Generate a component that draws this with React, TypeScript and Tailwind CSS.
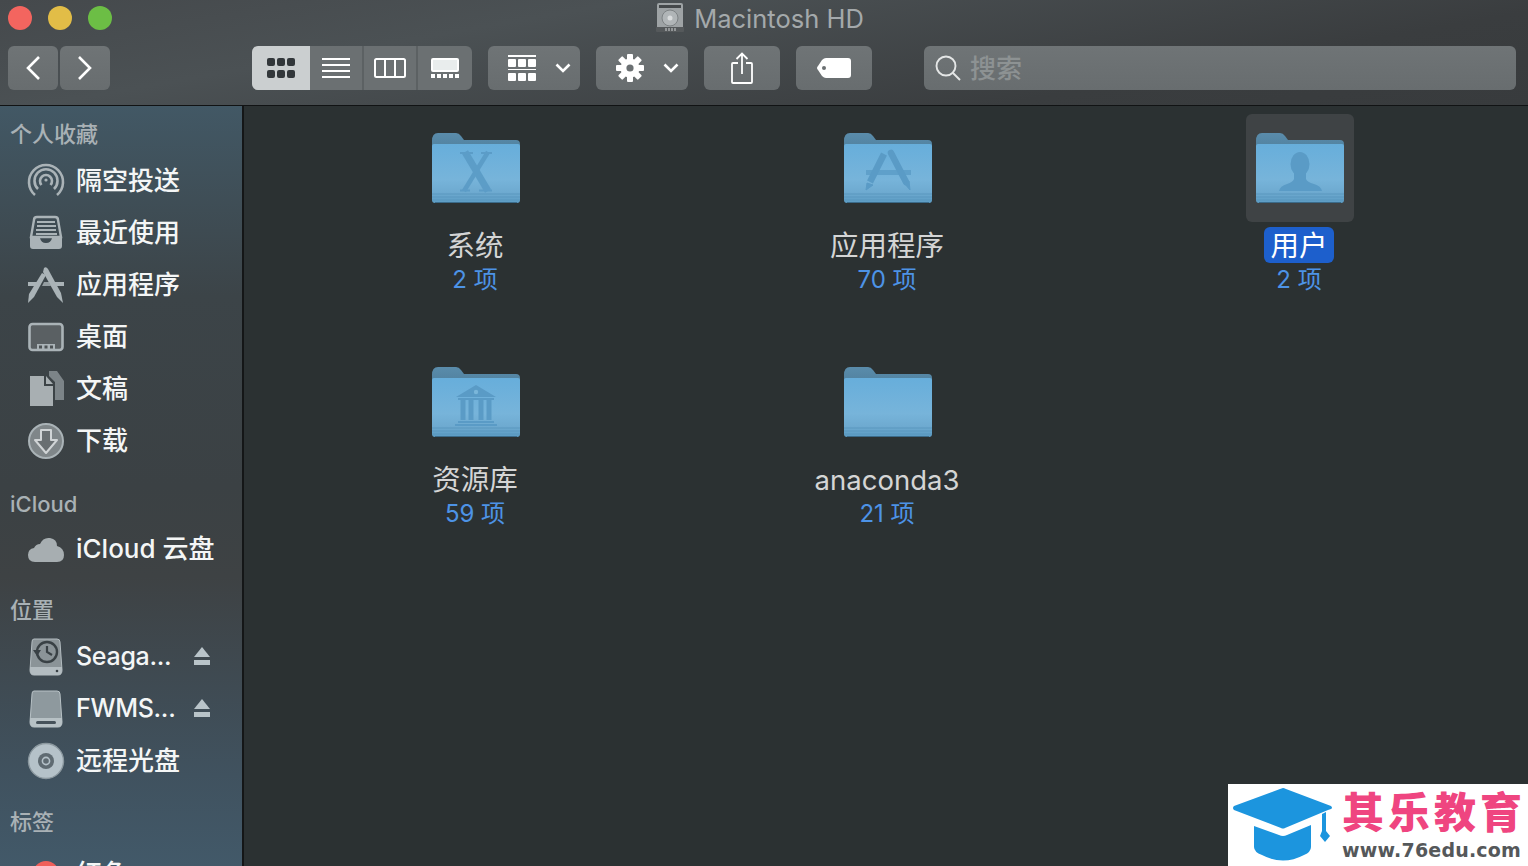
import React from "react";

const FONT = "font-['Inter','Noto_Sans_CJK_SC',sans-serif]";

function Defs() {
  return (
    <svg width="0" height="0" className="absolute">
      <defs>
        <linearGradient id="ff" x1="0" y1="0" x2="0" y2="1">
          <stop offset="0" stopColor="#67aedb" />
          <stop offset="0.6" stopColor="#77b4da" />
          <stop offset="0.82" stopColor="#6eaad0" />
          <stop offset="1" stopColor="#5c9cc4" />
        </linearGradient>
        <linearGradient id="fb" x1="0" y1="0" x2="0" y2="1">
          <stop offset="0" stopColor="#5a8cab" />
          <stop offset="1" stopColor="#4e7e9c" />
        </linearGradient>
      </defs>
    </svg>
  );
}

function Folder({ kind }: { kind?: "x" | "app" | "user" | "lib" }) {
  const c = "#5a9bc6";
  return (
    <svg width="88" height="70" viewBox="0 0 88 70">
      <path d="M0 8 Q0 0 6 0 H24 Q27 0 29 3 L32 7 H84 Q88 7 88 11 V20 H0 Z" fill="url(#fb)" />
      <path d="M2 11 H86 Q88 11 88 13 V67 Q88 70 85 70 H3 Q0 70 0 67 V13 Q0 11 2 11 Z" fill="url(#ff)" />
      <path d="M0 61 H88 M0 64 H88 M0 67 H88" stroke="#5895bc" strokeWidth="1" opacity="0.8" />
      <path d="M3 69.5 H85" stroke="#3b6b8a" strokeWidth="1" />
      {kind === "x" && (
        <g stroke={c} fill="none" opacity="0.9">
          <path d="M33 19 L56 58" strokeWidth="7" />
          <path d="M56 19 L32 58" strokeWidth="4.5" />
          <path d="M28 20 H41 M49 20 H60 M28 57.5 H38 M47 57.5 H60" strokeWidth="2" />
        </g>
      )}
      {kind === "app" && (
        <g fill="none" stroke={c}>
          <path d="M22 39.5 H67" strokeWidth="5" opacity="0.8" />
          <path d="M40 21 L26 49" strokeWidth="6.5" />
          <path d="M47 20 L62 49" strokeWidth="6.5" strokeLinecap="round" />
          <path d="M23 50 L22 57 L29 52 Z M60 50 L66 57 L65 48 Z" fill={c} strokeWidth="1" />
        </g>
      )}
      {kind === "user" && (
        <g fill={c}>
          <ellipse cx="44" cy="31" rx="9.5" ry="12" />
          <path d="M38 38 H50 V46 Q51 49 58 51 Q65 53 66 58 H23 Q24 53 31 51 Q37 49 38 46 Z" />
        </g>
      )}
      {kind === "lib" && (
        <g fill={c}>
          <path d="M44 18 L64 30 H24 Z" />
          <circle cx="44" cy="25" r="2.2" fill="#7ab6da" />
          <rect x="28.5" y="33" width="5" height="20" />
          <rect x="36.5" y="33" width="5" height="20" />
          <rect x="46.5" y="33" width="5" height="20" />
          <rect x="54.5" y="33" width="5" height="20" />
          <rect x="26" y="31" width="36" height="2" />
          <rect x="26" y="54" width="36" height="2" />
          <rect x="23" y="57" width="42" height="2" />
        </g>
      )}
    </svg>
  );
}

function Item({ name, sub, kind, selected, latin }: { name: string; sub: string; kind?: "x" | "app" | "user" | "lib"; selected?: boolean; latin?: boolean }) {
  return (
    <div className="flex flex-col items-center h-[234px]">
      <div className={`w-[108px] h-[108px] rounded-md flex items-center justify-center ${selected ? "bg-[#3f4345]" : ""}`}>
        <Folder kind={kind} />
      </div>
      <div className={`mt-[5px] h-[36px] leading-[38px] rounded-md -translate-x-[1px] ${latin ? "text-[27.5px]" : "text-[28.5px]"} ${selected ? "bg-[#1d5fcc] text-white px-[6px]" : "text-[#d4d5d5]"}`}>{name}</div>
      <div className="mt-[2px] h-[30px] leading-[30px] text-[24px] text-[#4d93e6] -translate-x-[1px]">{sub}</div>
    </div>
  );
}

const ic = "#aab3b7";

const Icons: Record<string, React.ReactNode> = {
  airdrop: (
    <svg width="38" height="38" viewBox="0 0 38 38" fill="none" stroke={ic}>
      <path d="M8 33 A17 17 0 1 1 30 33" strokeWidth="2.6" />
      <path d="M11 27 A11.5 11.5 0 1 1 27 27" strokeWidth="2.6" />
      <path d="M14.5 23 A6 6 0 1 1 23.5 23" strokeWidth="2.6" />
      <circle cx="19" cy="18" r="1.6" fill={ic} stroke="none" />
    </svg>
  ),
  recent: (
    <svg width="38" height="38" viewBox="0 0 38 38">
      <path d="M7 6 Q7 3 10 3 H28 Q31 3 31 6 L34 23 H4 Z" fill="none" stroke={ic} strokeWidth="2.4" />
      <path d="M3 24 H13 Q14 29 19 29 Q24 29 25 24 H35 V32 Q35 35 32 35 H6 Q3 35 3 32 Z" fill={ic} />
      <path d="M10 8 H28 M10 12 H29 M9 16 H29 M9 20 H30" stroke={ic} strokeWidth="2" />
    </svg>
  ),
  apps: (
    <svg width="38" height="38" viewBox="0 0 38 38" fill={ic}>
      <path d="M1 16 H13 L12 20 H1 Z M25 16 H37 V20 H27 Z" />
      <path d="M15 7 L19 9 L7 31 L1 37 L2 28 Z" />
      <path d="M17 2 Q19 0 21 3 L34 27 L36 37 L30 31 L16 6 Z" />
      <path d="M17 16 H22 L24 20 H15 Z" opacity="0.8" />
    </svg>
  ),
  desktop: (
    <svg width="38" height="38" viewBox="0 0 38 38">
      <rect x="2.5" y="6" width="33" height="26" rx="3" fill="#5a6063" stroke={ic} strokeWidth="2.6" />
      <rect x="10" y="26" width="18" height="6" fill={ic} />
      <path d="M12 27.5 h3 v3 h-3z M17.5 27.5 h3 v3 h-3z M23 27.5 h3 v3 h-3z" fill="#4c5255" />
    </svg>
  ),
  docs: (
    <svg width="38" height="38" viewBox="0 0 38 38">
      <path d="M22 1 H30 L37 11 V30 H28 V12 L22 6 Z" fill="#7c8488" />
      <path d="M3 6 H17 V16 H26 V36 H3 Z" fill="#a8afb2" />
      <path d="M19 6 L26 14 H19 Z" fill="#a8afb2" />
    </svg>
  ),
  down: (
    <svg width="38" height="38" viewBox="0 0 38 38">
      <circle cx="19" cy="19" r="17" fill="#7f8689" stroke={ic} strokeWidth="2" />
      <path d="M14 8 H24 V18 H30 L19 31 L8 18 H14 Z" fill="#696f72" stroke="#d0d4d6" strokeWidth="2" strokeLinejoin="round" />
    </svg>
  ),
  cloud: (
    <svg width="38" height="38" viewBox="0 0 38 38">
      <path d="M8 32 Q1 32 1 25 Q1 19 7 18 Q9 14 13 14 Q16 7 23 8 Q30 9 30 16 Q37 18 37 25 Q37 32 30 32 Z" fill="#a7aeb1" />
    </svg>
  ),
  tm: (
    <svg width="38" height="38" viewBox="0 0 38 38">
      <path d="M7 1 H30 Q33 1 33 4 L35 32 Q35 37 31 37 H7 Q3 37 3 32 L5 4 Q5 1 7 1 Z" fill="#8b9498" stroke="#b3bcc0" strokeWidth="1" />
      <path d="M3 29 H35 V32 Q35 37 31 37 H7 Q3 37 3 32 Z" fill="#b3bcc0" />
      <circle cx="30" cy="33" r="1.3" fill="#394145" />
      <circle cx="20" cy="14" r="10" fill="none" stroke="#394145" strokeWidth="2.4" />
      <path d="M20 8 V14 L25 17" fill="none" stroke="#394145" strokeWidth="2.2" />
      <path d="M6 12 H14 L10 18 Z" fill="#394145" />
    </svg>
  ),
  drive: (
    <svg width="38" height="38" viewBox="0 0 38 38">
      <path d="M7 1 H30 Q33 1 33 4 L35 32 Q35 37 31 37 H7 Q3 37 3 32 L5 4 Q5 1 7 1 Z" fill="#8e999e" stroke="#b7c1c5" strokeWidth="1" />
      <path d="M3 28 H35 V32 Q35 37 31 37 H7 Q3 37 3 32 Z" fill="#b7c1c5" />
      <rect x="9" y="31" width="20" height="3" rx="1.5" fill="#46525a" />
    </svg>
  ),
  disc: (
    <svg width="38" height="38" viewBox="0 0 38 38">
      <circle cx="19" cy="19" r="17.5" fill="#b5c2c9" stroke="#8b989f" strokeWidth="1.4" />
      <circle cx="19" cy="19" r="8" fill="#5f6b72" />
      <circle cx="19" cy="19" r="3.6" fill="none" stroke="#b5c2c9" strokeWidth="1.6" />
    </svg>
  ),
  red: (
    <svg width="38" height="38" viewBox="0 0 38 38">
      <circle cx="19" cy="19" r="13" fill="#f05f5a" />
    </svg>
  ),
};

function Eject() {
  return (
    <svg width="16" height="18" viewBox="0 0 16 18" className="mr-[32px] -translate-y-[1px]" fill="#b9c4c9">
      <path d="M8 0 L16 10 H0 Z" />
      <rect y="13" width="16" height="5" />
    </svg>
  );
}

function Row({ icon, label, eject, latin }: { icon: string; label: string; eject?: boolean; latin?: boolean }) {
  return (
    <div className="flex items-center h-[52px] pl-[27px]">
      <div className="w-[38px] h-[38px] mr-[11px] shrink-0">{Icons[icon]}</div>
      <span className={`flex-1 text-[#f4f6f6] font-medium whitespace-nowrap ${latin ? "text-[25px] tracking-[-0.3px]" : "pb-[2px] text-[26px]"}`}>{label}</span>
      {eject && <Eject />}
    </div>
  );
}

function Head({ children, className }: { children: React.ReactNode; className?: string }) {
  return <div className={`h-[38px] leading-[38px] pl-[10px] text-[22px] font-medium text-[#a9b1b5] ${className ?? ""}`}>{children}</div>;
}

const btn = "h-[44px] rounded-[6px] bg-[linear-gradient(#6f7476,#686d6f)] flex items-center justify-center";

function Chevron() {
  return (
    <svg width="16" height="10" viewBox="0 0 16 10" fill="none" stroke="#fff" strokeWidth="2.6">
      <path d="M1.5 1.5 L8 8 L14.5 1.5" />
    </svg>
  );
}

function Toolbar() {
  return (
    <div className="h-[105px] bg-[linear-gradient(170deg,#45494c_0%,#4b5154_30%,#3a3d3f_75%,#383b3d_100%)]">
      <div className="relative h-[46px] pt-[6px] pl-[8px] flex gap-[16px]">
        <div className="w-[24px] h-[24px] rounded-full bg-[#f3655f]" />
        <div className="w-[24px] h-[24px] rounded-full bg-[#e2bd47]" />
        <div className="w-[24px] h-[24px] rounded-full bg-[#6cbe45]" />
        <div className="flex-1 flex items-start justify-center pr-[136px] -mt-[5px] gap-[10px]">
          <svg width="28" height="30" viewBox="0 0 28 30" className="mt-[2px]">
            <rect x="1" y="0" width="26" height="28" rx="2" fill="#9ea3a5" />
            <rect x="3" y="2" width="22" height="3" fill="#44484a" />
            <circle cx="14" cy="15" r="8" fill="#b0b5b7" stroke="#7d8284" />
            <circle cx="14" cy="15" r="2.5" fill="#d9dcdd" />
            <rect x="0" y="24" width="28" height="5" rx="1" fill="#55595b" />
            <path d="M10 25 v3 M13 25 v3 M16 25 v3 M19 25 v3" stroke="#d0d3d4" />
          </svg>
          <span className="text-[25.5px] leading-[36px] text-[#a4a9ab]">Macintosh HD</span>
        </div>
      </div>
      <div className="flex items-center pl-[8px]">
        <div className={`${btn} w-[50px]`}>
          <svg width="16" height="26" viewBox="0 0 16 26" fill="none" stroke="#fff" strokeWidth="2.6"><path d="M14 2 L3 13 L14 24" /></svg>
        </div>
        <div className={`${btn} w-[50px] ml-[2px]`}>
          <svg width="16" height="26" viewBox="0 0 16 26" fill="none" stroke="#fff" strokeWidth="2.6"><path d="M2 2 L13 13 L2 24" /></svg>
        </div>

        <div className="flex ml-[142px] h-[44px] w-[220px] rounded-[6px] overflow-hidden bg-[#6b7072]">
          <div className="w-[58px] bg-[#cbcfd0] flex items-center justify-center">
            <svg width="28" height="20" viewBox="0 0 28 20" fill="#32373a">
              {[0, 10, 20].map((x) => [0, 12].map((y) => <rect key={`${x}${y}`} x={x} y={y} width="8" height="8" rx="2" />))}
            </svg>
          </div>
          <div className="w-[52px] flex items-center justify-center">
            <svg width="28" height="20" viewBox="0 0 28 20" fill="#fff">
              <rect y="0" width="28" height="2" /><rect y="6" width="28" height="2" /><rect y="12" width="28" height="2" /><rect y="18" width="28" height="2" />
            </svg>
          </div>
          <div className="w-[2px] bg-[#5c6163]" />
          <div className="w-[52px] flex items-center justify-center">
            <svg width="32" height="20" viewBox="0 0 32 20" fill="none" stroke="#fff" strokeWidth="2">
              <rect x="1" y="1" width="30" height="18" rx="1.5" /><path d="M11 1 V19 M21 1 V19" />
            </svg>
          </div>
          <div className="w-[2px] bg-[#5c6163]" />
          <div className="w-[54px] flex items-center justify-center">
            <svg width="28" height="20" viewBox="0 0 28 20">
              <rect x="1" y="1" width="26" height="12" rx="1" fill="#e9eded" stroke="#fff" strokeWidth="2" />
              {[0, 6, 12, 18, 24].map((x) => <rect key={x} x={x} y="16" width="4" height="4" fill="#fff" />)}
            </svg>
          </div>
        </div>

        <div className={`${btn} w-[92px] ml-[16px] pl-[20px] !justify-start`}>
          <svg width="28" height="26" viewBox="0 0 28 26" fill="#fff">
            <rect width="28" height="2" />
            <rect y="14" width="28" height="1" />
            {[0, 10, 20].map((x) => [4, 18].map((y) => <rect key={`${x}${y}`} x={x} y={y} width="8" height="8" rx="1" />))}
          </svg>
          <span className="ml-[19px] flex"><Chevron /></span>
        </div>
        <div className={`${btn} w-[92px] ml-[16px] pl-[20px] !justify-start`}>
          <svg width="28" height="28" viewBox="0 0 28 28">
            <g fill="#fff">
              {[0, 45, 90, 135].map((a) => <rect key={a} x="11" y="0" width="6" height="28" rx="1" transform={`rotate(${a} 14 14)`} />)}
              <circle cx="14" cy="14" r="9.5" />
            </g>
            <circle cx="14" cy="14" r="3.6" fill="#6b7072" />
          </svg>
          <span className="ml-[19px] flex"><Chevron /></span>
        </div>
        <div className={`${btn} w-[76px] ml-[16px]`}>
          <svg width="22" height="32" viewBox="0 0 22 32" fill="none" stroke="#fff" strokeWidth="1.8">
            <path d="M7 11 H2 Q1 11 1 12 V30 Q1 31 2 31 H20 Q21 31 21 30 V12 Q21 11 20 11 H15" />
            <path d="M11 22 V2 M5.5 7 L11 1.5 L16.5 7" />
          </svg>
        </div>
        <div className={`${btn} w-[76px] ml-[16px]`}>
          <svg width="34" height="20" viewBox="0 0 34 20">
            <path d="M9 0 H31 Q34 0 34 3 V17 Q34 20 31 20 H9 Q7 20 5 18 L1 12 Q-1 10 1 8 L5 2 Q7 0 9 0 Z" fill="#fff" />
            <circle cx="7" cy="10" r="2" fill="#6b7072" />
          </svg>
        </div>
        <div className={`${btn} w-[592px] ml-[52px] !justify-start pl-[11px]`}>
          <svg width="26" height="26" viewBox="0 0 26 26" fill="none" stroke="#e4e6e6" strokeWidth="1.9">
            <circle cx="11" cy="11" r="9.5" /><path d="M18 18 L25 25" />
          </svg>
          <span className="ml-[9px] text-[26px] font-medium text-[#8d9293]">搜索</span>
        </div>
      </div>
    </div>
  );
}

function Sidebar() {
  return (
    <aside className="w-[242px] h-full shrink-0 overflow-hidden bg-[linear-gradient(#425865_0%,#3c4448_25%,#3b4144_50%,#3e4244_62%,#40525f_88%,#425969_100%)] pt-[9px]">
      <Head className="mb-[2px]">个人收藏</Head>
      <Row icon="airdrop" label="隔空投送" />
      <Row icon="recent" label="最近使用" />
      <Row icon="apps" label="应用程序" />
      <Row icon="desktop" label="桌面" />
      <Row icon="docs" label="文稿" />
      <Row icon="down" label="下载" />
      <Head className="mt-[18px]">iCloud</Head>
      <Row icon="cloud" label="iCloud 云盘" />
      <Head className="mt-[16px] mb-[2px]">位置</Head>
      <Row icon="tm" label="Seaga..." eject latin />
      <Row icon="drive" label="FWMS..." eject latin />
      <Row icon="disc" label="远程光盘" />
      <Head className="mt-[16px] mb-[7px]">标签</Head>
      <Row icon="red" label="红色" />
    </aside>
  );
}

function Watermark() {
  return (
    <div className="absolute right-0 bottom-0 w-[300px] h-[82px] bg-white flex items-center pl-[4px]">
      <svg width="102" height="76" viewBox="0 0 102 76" className="shrink-0">
        <g fill="#1c95de">
          <path d="M51 1 Q52 1 54 2 L99 19 Q101 21 99 22 L96 23 L53 41 Q51 42 49 41 L2 23 Q0 21 2 19 L48 2 Z" />
          <path d="M22 39 L47 48 Q51 50 55 48 L79 38 V60 Q79 65 72 68 Q51 79 30 68 Q22 65 22 60 Z" />
          <path d="M90 27 L94 25 V44 L98 49 L93 55 L88 49 L90 44 Z" />
        </g>
      </svg>
      <div className="ml-[8px] flex flex-col gap-[6px]">
        <div className="text-[42px] leading-[44px] tracking-[4px] font-black text-[#ef4580] whitespace-nowrap font-['Noto_Sans_CJK_SC',sans-serif]">其乐教育</div>
        <div className="text-[19px] leading-[24px] font-bold tracking-[0.2px] text-[#55585a] whitespace-nowrap font-['DejaVu_Sans',sans-serif]">www.76edu.com</div>
      </div>
    </div>
  );
}

export default function App() {
  return (
    <div className={`relative w-[1528px] h-[866px] overflow-hidden bg-[#2b3132] ${FONT}`}>
      <Defs />
      <Toolbar />
      <div className="h-[1px] bg-[#111314]" />
      <div className="flex h-[760px]">
        <Sidebar />
        <div className="w-[2px] bg-[#141617] shrink-0" />
        <main className="flex-1 pl-[26px] pt-[8px] grid grid-cols-[repeat(3,412px)] content-start">
          <Item name="系统" sub="2 项" kind="x" />
          <Item name="应用程序" sub="70 项" kind="app" />
          <Item name="用户" sub="2 项" kind="user" selected />
          <Item name="资源库" sub="59 项" kind="lib" />
          <Item name="anaconda3" sub="21 项" latin />
        </main>
      </div>
      <Watermark />
    </div>
  );
}
